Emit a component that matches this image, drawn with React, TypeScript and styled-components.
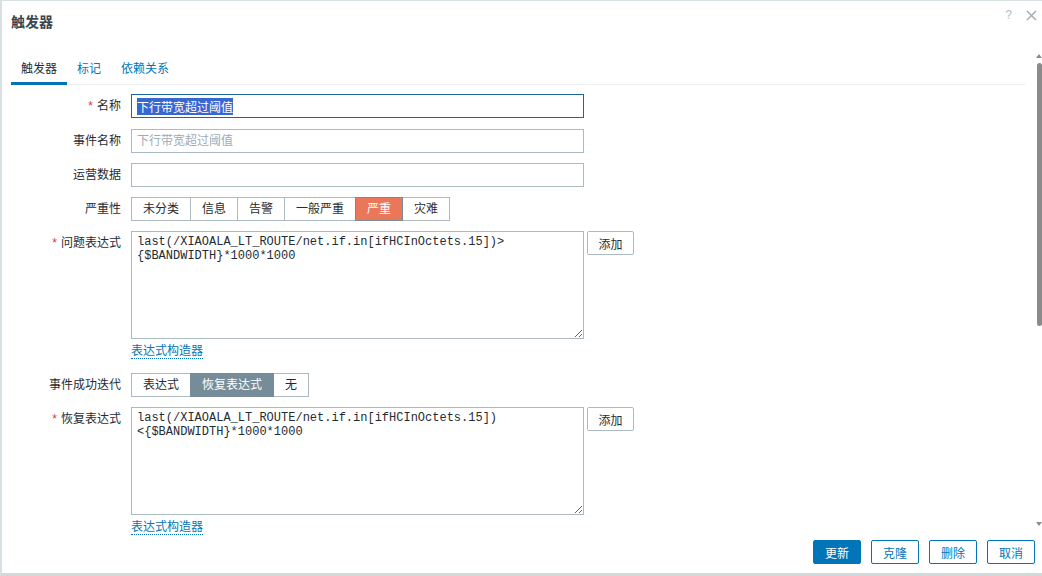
import React, {useEffect, useRef} from "react";
import styled, {createGlobalStyle, css} from "styled-components";

const GlobalStyle = createGlobalStyle`
  html, body {
    margin: 0;
    padding: 0;
  }
  body {
    font-family: "Liberation Sans", "Noto Sans CJK SC", sans-serif;
    font-size: 12px;
    color: #1f2c33;
    background: #fff;
    overflow: hidden;
  }
`

const severities = ['未分类', '信息', '告警', '一般严重', '严重', '灾难']
const recoveryModes = ['表达式', '恢复表达式', '无']

const problemExpr = 'last(/XIAOALA_LT_ROUTE/net.if.in[ifHCInOctets.15])>\n{$BANDWIDTH}*1000*1000'
const recoveryExpr = 'last(/XIAOALA_LT_ROUTE/net.if.in[ifHCInOctets.15])\n<{$BANDWIDTH}*1000*1000'

const App = () => {
    const nameRef = useRef<HTMLInputElement>(null)
    useEffect(() => {
        nameRef.current?.focus()
        nameRef.current?.select()
    }, [])
    return (
        <>
            <GlobalStyle/>
            <Dialog>
                <Header>
                    <Title>触发器</Title>
                    <Tools>
                        <Help>?</Help>
                        <svg width="11" height="11" viewBox="0 0 11 11">
                            <path d="M1 1 L10 10 M10 1 L1 10" stroke="#a3aeb4" strokeWidth="1.5"/>
                        </svg>
                    </Tools>
                </Header>
                <Body>
                    <TabList>
                        <Tab $active>触发器</Tab>
                        <Tab>标记</Tab>
                        <Tab>依赖关系</Tab>
                    </TabList>
                    <Form>
                        <Row>
                            <Label><Req>*</Req>名称</Label>
                            <TextInput ref={nameRef} defaultValue="下行带宽超过阈值"/>
                        </Row>
                        <Row>
                            <Label>事件名称</Label>
                            <TextInput placeholder="下行带宽超过阈值"/>
                        </Row>
                        <Row>
                            <Label>运营数据</Label>
                            <TextInput/>
                        </Row>
                        <Row>
                            <Label>严重性</Label>
                            <Segments>
                                {severities.map(s => (
                                    <Segment key={s} $tone={s === '严重' ? 'high' : undefined}>{s}</Segment>
                                ))}
                            </Segments>
                        </Row>
                        <Row>
                            <Label><Req>*</Req>问题表达式</Label>
                            <Field>
                                <ExprLine>
                                    <Expr defaultValue={problemExpr}/>
                                    <AddButton>添加</AddButton>
                                </ExprLine>
                                <LinkLine><Builder href="#">表达式构造器</Builder></LinkLine>
                            </Field>
                        </Row>
                        <Row>
                            <Label>事件成功迭代</Label>
                            <Segments>
                                {recoveryModes.map(m => (
                                    <Segment key={m} $tone={m === '恢复表达式' ? 'checked' : undefined}>{m}</Segment>
                                ))}
                            </Segments>
                        </Row>
                        <Row>
                            <Label><Req>*</Req>恢复表达式</Label>
                            <Field>
                                <ExprLine>
                                    <Expr defaultValue={recoveryExpr}/>
                                    <AddButton>添加</AddButton>
                                </ExprLine>
                                <LinkLine><Builder href="#">表达式构造器</Builder></LinkLine>
                            </Field>
                        </Row>
                    </Form>
                    <Rail>
                        <ArrowUp/>
                        <Thumb/>
                        <ArrowDown/>
                    </Rail>
                </Body>
                <Footer>
                    <FootButton $primary>更新</FootButton>
                    <FootButton>克隆</FootButton>
                    <FootButton>删除</FootButton>
                    <FootButton>取消</FootButton>
                </Footer>
            </Dialog>
        </>
    )
}

const Dialog = styled.div`
  box-sizing: border-box;
  width: 1042px;
  height: 576px;
  display: flex;
  flex-direction: column;
  border-top: 1px solid #d9e0e3;
  border-left: 2px solid #d9e0e3;
  border-bottom: 3px solid #d3d8da;
  background: #fff;
`
const Header = styled.div`
  flex: none;
  height: 49px;
  box-sizing: border-box;
  padding: 0 5px 0 9px;
  display: flex;
  justify-content: space-between;
  align-items: flex-start;
`
const Title = styled.h4`
  margin: 13px 0 0;
  font-size: 14px;
  line-height: 17px;
  font-weight: bold;
  color: #3a464d;
`
const Tools = styled.div`
  display: flex;
  align-items: center;
  gap: 14px;
  margin-top: 8px;
  height: 12px;
`
const Help = styled.span`
  font-size: 12px;
  color: #acbbc2;
`
const Body = styled.div`
  position: relative;
  flex: 1;
  overflow: hidden;
  padding: 6px 17px 0 9px;
`
const Rail = styled.div`
  position: absolute;
  top: 0;
  right: 0;
  bottom: 0;
  width: 6px;
  box-sizing: border-box;
  padding: 4px 0 9px;
  display: flex;
  flex-direction: column;
  align-items: center;
`
const ArrowUp = styled.div`
  width: 0;
  height: 0;
  border-left: 3px solid transparent;
  border-right: 3px solid transparent;
  border-bottom: 4px solid #8b8b8b;
`
const ArrowDown = styled.div`
  margin-top: auto;
  width: 0;
  height: 0;
  border-left: 3px solid transparent;
  border-right: 3px solid transparent;
  border-top: 4px solid #8b8b8b;
`
const Thumb = styled.div`
  margin-top: 5px;
  width: 5px;
  height: 263px;
  border-radius: 3px;
  background: #8b8b8b;
`
const TabList = styled.div`
  display: flex;
  border-bottom: 1px solid #ebeef0;
`
const Tab = styled.a<{ $active?: boolean }>`
  height: 26px;
  line-height: 27px;
  padding: 0 10px;
  margin-bottom: -1px;
  border-bottom: 3px solid ${p => p.$active ? '#0275b8' : 'transparent'};
  color: ${p => p.$active ? '#1f2c33' : '#0275b8'};
  cursor: pointer;
`
const Form = styled.div`
  padding-top: 9px;
`
const Row = styled.div`
  display: flex;
  gap: 10px;
  margin-bottom: 10px;

  &:first-child {
    margin-bottom: 11px;
  }
`
const Label = styled.label`
  flex: none;
  width: 110px;
  text-align: right;
  line-height: 24px;
  color: #1f2c33;
`
const Req = styled.span`
  color: #e33734;
  margin-right: 4px;
`
const fieldBorder = css`
  box-sizing: border-box;
  width: 453px;
  border: 1px solid #acbbc2;
  border-radius: 0;
  background: #fff;
  color: #1f2c33;
  outline: none;
`
const TextInput = styled.input`
  ${fieldBorder};
  height: 24px;
  padding: 0 5px;
  font: inherit;

  &:focus {
    border-color: #1d64a1;
  }
  &::selection {
    background: #3767d1;
    color: #fff;
  }
  &::placeholder {
    color: #a2aaaf;
  }
`
const Field = styled.div`
  display: flex;
  flex-direction: column;
`
const ExprLine = styled.div`
  display: flex;
  align-items: flex-start;
  gap: 3px;
`
const Expr = styled.textarea`
  ${fieldBorder};
  display: block;
  height: 108px;
  margin: 0;
  padding: 3px 5px;
  font-family: "Liberation Mono", "Noto Sans CJK SC", monospace;
  font-size: 12px;
  line-height: 14px;
  resize: vertical;
`
const AddButton = styled.button`
  width: 47px;
  height: 24px;
  padding: 0;
  border: 1px solid #acbbc2;
  border-radius: 2px;
  background: #fff;
  color: #1f2c33;
  font: inherit;
`
const LinkLine = styled.div`
  height: 24px;
  box-sizing: border-box;
  padding-top: 5px;
`
const Builder = styled.a`
  display: inline-block;
  line-height: 14px;
  color: #0275b8;
  text-decoration: none;
  border-bottom: 1px dotted #0275b8;
`
const Segments = styled.div`
  display: flex;
`
const toneColors: Record<string, string> = {
    high: '#ea775a',
    checked: '#768d99',
}
const Segment = styled.label<{ $tone?: string }>`
  position: relative;
  box-sizing: border-box;
  height: 24px;
  line-height: 22px;
  padding: 0 11px;
  border: 1px solid ${p => p.$tone ? '#768d99' : '#acbbc2'};
  background: ${p => p.$tone ? toneColors[p.$tone] : '#fff'};
  color: ${p => p.$tone ? '#fff' : '#1f2c33'};
  z-index: ${p => p.$tone ? 1 : 0};

  & + & {
    margin-left: -1px;
  }
`
const Footer = styled.div`
  flex: none;
  display: flex;
  justify-content: flex-end;
  gap: 10px;
  padding: 5px 7px 9px 0;
`
const FootButton = styled.button<{ $primary?: boolean }>`
  width: 48px;
  height: 24px;
  padding: 0;
  border: 1px solid #0275b8;
  border-radius: 2px;
  background: ${p => p.$primary ? '#0275b8' : '#fff'};
  color: ${p => p.$primary ? '#fff' : '#0275b8'};
  font: inherit;
`

export default App
